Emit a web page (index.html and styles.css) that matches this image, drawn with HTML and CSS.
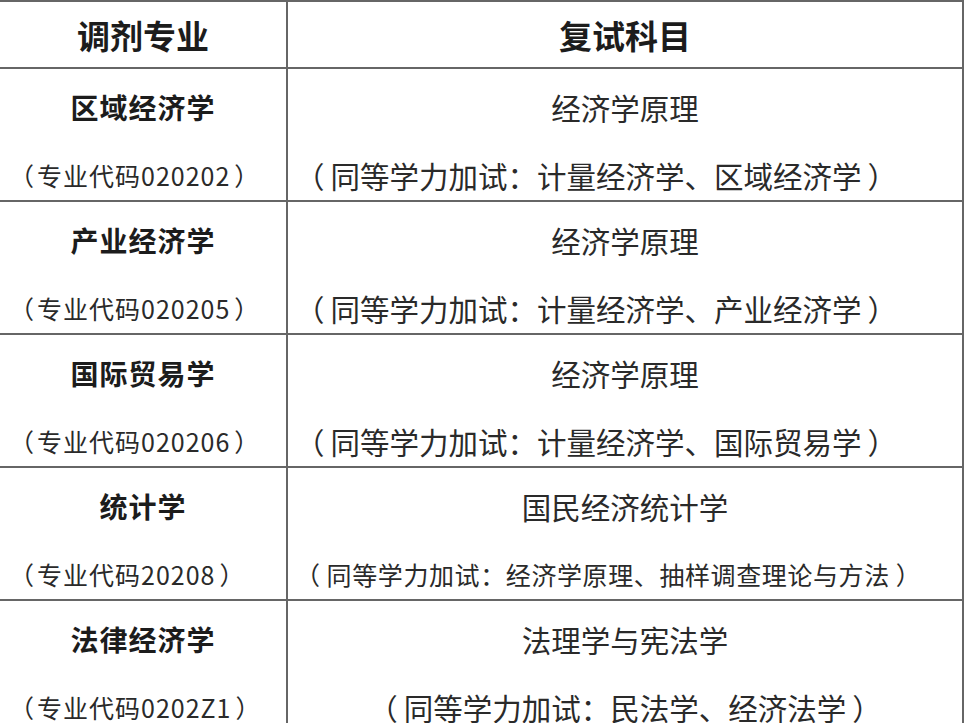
FILE: index.html
```html
<!DOCTYPE html>
<html lang="zh-CN">
<head>
<meta charset="utf-8">
<title>调剂专业与复试科目</title>
<link rel="stylesheet" href="styles.css">
</head>
<body>
<div class="table">
  <div class="row head">
    <div class="cell c1"><div class="htext">调剂专业</div></div>
    <div class="cell c2"><div class="htext">复试科目</div></div>
  </div>
  <div class="row">
    <div class="cell c1"><div class="l1 name">区域经济学</div><div class="l2 code"><span class="lp">（</span>专业代码020202<span class="rp">）</span></div></div>
    <div class="cell c2"><div class="l1 subj">经济学原理</div><div class="l2 extra"><span class="lp">（</span>同等学力加试：计量经济学、区域经济学<span class="rp">）</span></div></div>
  </div>
  <div class="row">
    <div class="cell c1"><div class="l1 name">产业经济学</div><div class="l2 code"><span class="lp">（</span>专业代码020205<span class="rp">）</span></div></div>
    <div class="cell c2"><div class="l1 subj">经济学原理</div><div class="l2 extra"><span class="lp">（</span>同等学力加试：计量经济学、产业经济学<span class="rp">）</span></div></div>
  </div>
  <div class="row">
    <div class="cell c1"><div class="l1 name">国际贸易学</div><div class="l2 code"><span class="lp">（</span>专业代码020206<span class="rp">）</span></div></div>
    <div class="cell c2"><div class="l1 subj">经济学原理</div><div class="l2 extra"><span class="lp">（</span>同等学力加试：计量经济学、国际贸易学<span class="rp">）</span></div></div>
  </div>
  <div class="row">
    <div class="cell c1"><div class="l1 name">统计学</div><div class="l2 code"><span class="lp">（</span>专业代码20208<span class="rp">）</span></div></div>
    <div class="cell c2"><div class="l1 subj">国民经济统计学</div><div class="l2 extra small"><span class="lp">（</span>同等学力加试：经济学原理、抽样调查理论与方法<span class="rp">）</span></div></div>
  </div>
  <div class="row">
    <div class="cell c1"><div class="l1 name">法律经济学</div><div class="l2 code"><span class="lp">（</span>专业代码0202Z1<span class="rp">）</span></div></div>
    <div class="cell c2"><div class="l1 subj">法理学与宪法学</div><div class="l2 extra centered"><span class="lp">（</span>同等学力加试：民法学、经济法学<span class="rp">）</span></div></div>
  </div>
</div>
</body>
</html>
```

FILE: styles.css
```css
html, body {
  margin: 0;
  padding: 0;
  background: #ffffff;
  overflow: hidden;
}

body {
  font-family: "Noto Sans CJK SC", "Noto Sans", sans-serif;
  color: #2a2a2a;
}

.table {
  width: 964px;
  border-top: 2px solid #666666;
  border-right: 2px solid #666666;
  box-sizing: border-box;
}

.row {
  display: grid;
  grid-template-columns: 288px 674px;
  height: 133px;
  border-bottom: 2px solid #666666;
  box-sizing: border-box;
}

.row.head {
  height: 67px;
}

.cell {
  display: flex;
  flex-direction: column;
  padding-top: 14px;
  box-sizing: border-box;
}

.c1 {
  border-right: 2px solid #666666;
}

.head .cell {
  padding-top: 1px;
}

.htext {
  font-size: 33px;
  font-weight: 700;
  line-height: 64px;
  text-align: center;
  color: #1c1c1c;
}

.l1 {
  line-height: 48px;
  height: 48px;
  text-align: center;
}

.l2 {
  margin-top: 19px;
  line-height: 50px;
  height: 50px;
  white-space: nowrap;
}

.name {
  font-size: 28px;
  font-weight: 700;
  letter-spacing: 1px;
  color: #1c1c1c;
}

.code {
  font-size: 25px;
  letter-spacing: 1px;
  padding-left: 9px;
}

.code .lp {
  margin-right: 2px;
}

.code .rp {
  margin-left: 4px;
}

.subj {
  font-size: 29.5px;
}

.extra {
  font-size: 29.5px;
  padding-left: 7px;
}

.extra .lp {
  margin-right: 6px;
}

.extra .rp {
  margin-left: 6px;
}

.extra.small {
  font-size: 25px;
  letter-spacing: 0.6px;
}

.extra.centered {
  padding-left: 0;
  text-align: center;
}
```
